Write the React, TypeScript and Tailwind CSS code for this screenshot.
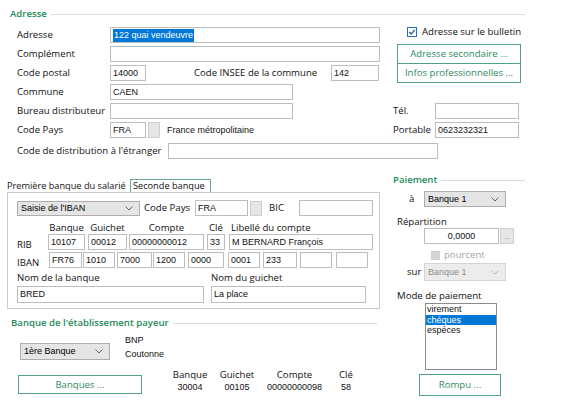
import type { ReactNode } from "react";

const green = "text-[#1f8a5b]";

function Box({ className = "", children }: { className?: string; children?: ReactNode }) {
  return (
    <div
      className={`h-[16px] shrink-0 border border-[#bdbdbd] bg-white px-[2px] flex items-center font-['Liberation_Sans',sans-serif] text-[9px] leading-none whitespace-nowrap overflow-hidden ${className}`}
    >
      {children}
    </div>
  );
}

function Dots() {
  return <div className="h-[16px] w-[12px] shrink-0 ml-[2px] border border-[#cfcfcf] bg-[#e6e6e6]" />;
}

function Chevron({ color = "#555" }: { color?: string }) {
  return (
    <svg width="8" height="5" viewBox="0 0 8 5" className="shrink-0">
      <polyline points="0.5,0.5 4,4 7.5,0.5" fill="none" stroke={color} strokeWidth="0.9" />
    </svg>
  );
}

function Select({ className = "", label, disabled = false }: { className?: string; label: string; disabled?: boolean }) {
  return (
    <div
      className={`shrink-0 flex items-center justify-between pl-[3px] pr-[6px] border font-['Liberation_Sans',sans-serif] text-[9px] leading-none ${
        disabled ? "border-[#d4d4d4] bg-[#ececec] text-[#8e8e8e]" : "border-[#adadad] bg-[#e5e5e5] text-black"
      } ${className}`}
    >
      <span>{label}</span>
      <Chevron color={disabled ? "#b0b0b0" : "#555"} />
    </div>
  );
}

function Heading({ title, className = "" }: { title: string; className?: string }) {
  return (
    <div className={`flex items-center h-[12px] ${className}`}>
      <span className={`${green} font-semibold whitespace-nowrap`}>{title}</span>
      <div className="flex-1 h-px bg-[#dcdcdc] ml-[4px]" />
    </div>
  );
}

function GreenButton({ className = "", children }: { className?: string; children: ReactNode }) {
  return (
    <div className={`shrink-0 flex items-center justify-center border border-[#4f9f80] bg-white text-[#2f8a62] ${className}`}>
      {children}
    </div>
  );
}

export default function App() {
  return (
    <div className="w-[576px] h-[411px] overflow-hidden bg-white text-[#111] font-['Open_Sans',sans-serif] text-[9.6px] leading-none">
      {/* Adresse */}
      <Heading title="Adresse" className="mt-[8px] pl-[10px] pr-[51px]" />

      <div className="flex mt-[7px]">
        <div className="w-[380px] pl-[17px] flex flex-col gap-[3px]">
          <div className="flex items-center">
            <span className="w-[93px]">Adresse</span>
            <Box className="w-[270px]">
              <span className="bg-[#0078d7] text-white px-px py-[2px]">122 quai vendeuvre</span>
            </Box>
          </div>
          <div className="flex items-center">
            <span className="w-[93px]">Complément</span>
            <Box className="w-[270px]" />
          </div>
          <div className="flex items-center">
            <span className="w-[93px]">Code postal</span>
            <Box className="w-[36px]">14000</Box>
            <span className="ml-[48px] w-[137px] whitespace-nowrap">Code INSEE de la commune</span>
            <Box className="w-[48px]">142</Box>
          </div>
          <div className="flex items-center">
            <span className="w-[93px]">Commune</span>
            <Box className="w-[183px]">CAEN</Box>
          </div>
          <div className="flex items-center">
            <span className="w-[93px] whitespace-nowrap">Bureau distributeur</span>
            <Box className="w-[183px]" />
          </div>
          <div className="flex items-center">
            <span className="w-[93px]">Code Pays</span>
            <Box className="w-[36px]">FRA</Box>
            <Dots />
            <span className="ml-[7px] font-['Liberation_Sans',sans-serif] text-[9px]">France métropolitaine</span>
          </div>
        </div>

        <div className="ml-[13px] w-[132px] flex flex-col">
          <div className="flex items-center h-[10px] pl-[14px]">
            <svg width="10" height="10" viewBox="0 0 10 10" className="shrink-0">
              <rect x="0.5" y="0.5" width="9" height="9" fill="white" stroke="#2b6cc4" />
              <polyline points="2.2,5 4.2,7 7.8,2.8" fill="none" stroke="#1d5cb0" strokeWidth="1.3" />
            </svg>
            <span className="ml-[5px] whitespace-nowrap">Adresse sur le bulletin</span>
          </div>
          <div className="mt-[7px] ml-[4px] w-[124px] border border-[#4f9f80] text-[#2f8a62] flex flex-col">
            <div className="h-[19px] flex items-center justify-center border-b border-[#4f9f80] whitespace-nowrap">Adresse secondaire ...</div>
            <div className="h-[18px] flex items-center justify-center whitespace-nowrap">Infos professionnelles ...</div>
          </div>
          <div className="mt-[20px] flex items-center">
            <span className="w-[42px]">Tél.</span>
            <Box className="w-[84px]" />
          </div>
          <div className="mt-[3px] flex items-center">
            <span className="w-[42px]">Portable</span>
            <Box className="w-[84px]">0623232321</Box>
          </div>
        </div>
      </div>

      <div className="flex items-center mt-[5px] pl-[17px]">
        <span className="w-[151px] whitespace-nowrap">Code de distribution à l'étranger</span>
        <Box className="w-[270px]" />
      </div>

      {/* Banques du salarié + Paiement */}
      <div className="flex mt-[15px]">
        <div className="ml-[7px] w-[373px] flex flex-col">
          <div className="mt-[5px] flex items-end h-[13px]">
            <span className="w-[123px] pb-[2px] whitespace-nowrap text-[9.2px]">Première banque du salarié</span>
            <span className="h-[13px] w-[81px] border border-b-0 border-[#6aa890] flex items-center pl-[2px] whitespace-nowrap text-[9.2px]">Seconde banque</span>
          </div>
          <div className="border border-[#cbcbcb] pl-[9px] pt-[7px] pb-[5px]">
            <div className="flex items-center">
              <Select className="w-[123px] h-[15px]" label="Saisie de l'IBAN" />
              <span className="ml-[4px] w-[51px]">Code Pays</span>
              <Box className="w-[53px] h-[15px]">FRA</Box>
              <div className="h-[15px] w-[12px] shrink-0 ml-[2px] border border-[#cfcfcf] bg-[#e6e6e6]" />
              <span className="ml-[7px] w-[30px]">BIC</span>
              <Box className="w-[74px] h-[15px]" />
            </div>

            <div className="mt-[6px] flex items-center h-[11px]">
              <span className="w-[31px]" />
              <span className="w-[37px] text-center">Banque</span>
              <span className="ml-[3px] w-[39px] text-center">Guichet</span>
              <span className="ml-[2px] w-[75px] text-center">Compte</span>
              <span className="ml-[3px] w-[18px] text-center">Clé</span>
              <span className="ml-[6px] whitespace-nowrap">Libellé du compte</span>
            </div>

            <div className="mt-[1px] flex items-center">
              <span className="w-[31px] pt-[5px]">RIB</span>
              <Box className="w-[37px]">10107</Box>
              <Box className="ml-[3px] w-[39px]">00012</Box>
              <Box className="ml-[2px] w-[75px]">00000000012</Box>
              <Box className="ml-[3px] w-[18px]">33</Box>
              <Box className="ml-[4px] w-[144px]">M BERNARD François</Box>
            </div>

            <div className="mt-[2px] flex items-center">
              <span className="w-[32px] pt-[5px]">IBAN</span>
              <Box className="w-[33px]">FR76</Box>
              <Box className="ml-[1px] w-[32px]">1010</Box>
              <Box className="ml-[2px] w-[35px]">7000</Box>
              <Box className="ml-[1px] w-[32px]">1200</Box>
              <Box className="ml-[3px] w-[36px]">0000</Box>
              <Box className="ml-[4px] w-[32px]">0001</Box>
              <Box className="ml-[3px] w-[34px]">233</Box>
              <Box className="ml-[3px] w-[32px]" />
              <Box className="ml-[4px] w-[32px]" />
            </div>

            <div className="mt-[4px] flex items-center h-[11px]">
              <span className="w-[194px]">Nom de la banque</span>
              <span>Nom du guichet</span>
            </div>
            <div className="mt-[3px] flex items-center">
              <Box className="w-[187px] h-[17px]">BRED</Box>
              <Box className="ml-[7px] w-[155px] h-[17px]">La place</Box>
            </div>
          </div>

          {/* Banque de l'établissement payeur */}
          <Heading title="Banque de l'établissement payeur" className="mt-[8px] pl-[4px] pr-[3px]" />
          <div className="mt-[4px] flex items-start pl-[13px]">
            <Select className="mt-[10px] w-[90px] h-[17px]" label="1ère Banque" />
            <div className="ml-[15px] leading-[14px] font-['Liberation_Sans',sans-serif] text-[9px]">
              <div>BNP</div>
              <div>Coutonne</div>
            </div>
          </div>
          <div className="mt-[7px] flex items-start pl-[11px]">
            <GreenButton className="mt-[7px] w-[124px] h-[19px]">Banques ...</GreenButton>
            {[
              { w: "ml-[30px] w-[36px]", h: "Banque", v: "30004" },
              { w: "ml-[10px] w-[38px]", h: "Guichet", v: "00105" },
              { w: "ml-[8px] w-[61px]", h: "Compte", v: "00000000098" },
              { w: "ml-[11px] w-[20px]", h: "Clé", v: "58" },
            ].map((c) => (
              <div key={c.h} className={`${c.w} flex flex-col items-center`}>
                <span className="h-[13px] flex items-center whitespace-nowrap">{c.h}</span>
                <span className="h-[12px] flex items-center whitespace-nowrap font-['Liberation_Sans',sans-serif] text-[9px]">{c.v}</span>
              </div>
            ))}
          </div>
        </div>

        {/* Paiement */}
        <div className="ml-[13px] w-[132px] flex flex-col">
          <Heading title="Paiement" />
          <div className="mt-[5px] flex items-center pl-[16px]">
            <span className="w-[15px]">à</span>
            <Select className="w-[82px] h-[16px]" label="Banque 1" />
          </div>
          <div className="mt-[9px] h-[12px] flex items-center pl-[4px]">Répartition</div>
          <div className="flex items-center pl-[31px]">
            <Box className="w-[75px] justify-center">0,0000</Box>
            <div className="h-[16px] w-[14px] shrink-0 ml-px border border-[#cfcfcf] bg-[#e6e6e6] flex items-end justify-center pb-[3px] text-[#9a9a9a] text-[7px]">...</div>
          </div>
          <div className="mt-[5px] h-[12px] flex items-center pl-[38px]">
            <div className="w-[9px] h-[9px] bg-[#d6d6d6] border border-[#cfcfcf]" />
            <span className="ml-[4px] text-[#a4a4a4]">pourcent</span>
          </div>
          <div className="mt-[2px] flex items-center pl-[14px]">
            <span className="w-[17px]">sur</span>
            <Select className="w-[82px] h-[18px]" label="Banque 1" disabled />
          </div>
          <div className="mt-[9px] h-[12px] flex items-center pl-[4px] whitespace-nowrap">Mode de paiement</div>
          <div className="mt-px ml-[32px] w-[72px] h-[67px] border border-[#8c8c8c] bg-white flex flex-col font-['Liberation_Sans',sans-serif] text-[9px] leading-[10.5px]">
            <span className="pl-px">virement</span>
            <span className="pl-px bg-[#0078d7] text-white">chéques</span>
            <span className="pl-px">espéces</span>
          </div>
          <GreenButton className="mt-[4px] ml-[26px] w-[82px] h-[22px]">Rompu ...</GreenButton>
        </div>
      </div>
    </div>
  );
}
